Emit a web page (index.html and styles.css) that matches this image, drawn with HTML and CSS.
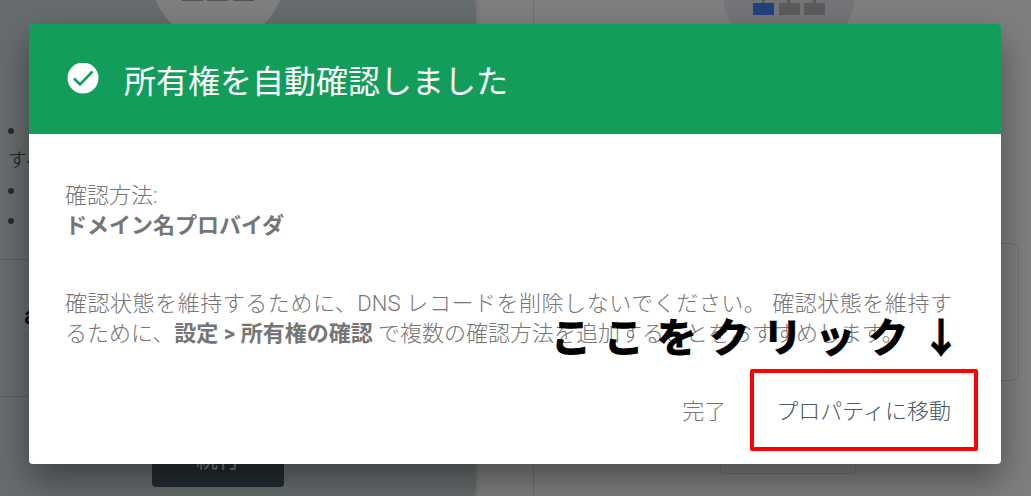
FILE: index.html
```
<!DOCTYPE html>
<html lang="ja">
<head>
<meta charset="utf-8">
<meta name="viewport" content="width=device-width, initial-scale=1">
<title>所有権を自動確認しました</title>
<link rel="stylesheet" href="styles.css">
</head>
<body>
<div class="screen">
  <main class="page">
    <section class="panel panel-domain">
      <svg class="panel-icon" viewBox="0 0 134 60" aria-hidden="true">
        <circle cx="67" cy="-25" r="67" fill="#fff"/>
        <path d="M31 -10h21V1H31zM56 -10h21V1H56zM82 -10h21V1H82z" fill="#aaa"/>
      </svg>
      <ul class="notes">
        <li><span class="note-text">すべ</span></li>
        <li></li>
        <li></li>
      </ul>
      <div class="field-area">
        <input class="domain-input" type="text" value="a" aria-label="ドメイン">
      </div>
      <button class="continue" type="button">続行</button>
    </section>
    <section class="panel panel-url">
      <svg class="panel-icon" viewBox="0 0 134 60" aria-hidden="true">
        <circle cx="67" cy="-8" r="66" fill="#e8eaf0"/>
        <path d="M40 0h3v3h-3zM65 0h3v3h-3zM91 0h3v3h-3zM57 3h21v12H57zM82 3h21v12H82z" fill="#b9b9b9"/>
        <path d="M31 3h21v12H31z" fill="#4285f4"/>
      </svg>
      <div class="url-box"></div>
      <div class="url-action"></div>
    </section>
  </main>

  <div class="overlay">
    <div class="dialog" role="dialog" aria-labelledby="dialog-title">
      <header class="dialog-header">
        <svg class="check" viewBox="0 0 32 32" aria-hidden="true">
          <circle cx="16" cy="15" r="15.5" fill="#fff"/>
          <path d="M7 15.500l6 6L25.500 8.500" fill="none" stroke="#129e5a" stroke-width="2.600"/>
        </svg>
        <h1 class="dialog-title" id="dialog-title">所有権を自動確認しました</h1>
      </header>
      <div class="dialog-body">
        <p class="method">確認方法:<br><strong>ドメイン名プロバイダ</strong></p>
        <p class="advice">確認状態を維持するために、DNS レコードを削除しないでください。 確認状態を維持するために、<strong>設定 &gt; 所有権の確認</strong> で複数の確認方法を追加することをおすすめします。</p>
      </div>
      <footer class="dialog-actions">
        <button class="action" type="button">完了</button>
        <button class="action action-primary" type="button">プロパティに移動</button>
      </footer>
      <p class="callout">ここをクリック↓</p>
      <div class="highlight"></div>
    </div>
  </div>
</div>
</body>
</html>
```
FILE: styles.css
```
* {
  box-sizing: border-box;
}

body {
  margin: 0;
  font-family: Roboto, "Noto Sans CJK JP", sans-serif;
  font-size: 22px;
  line-height: 30px;
  color: #757575;
}

p, h1, ul {
  margin: 0;
  padding: 0;
}

button, input {
  font: inherit;
}

.screen {
  position: relative;
  min-height: 100vh;
  overflow: hidden;
}

.page {
  display: grid;
  grid-template-columns: 46% 1fr;
  min-height: 100vh;
  background: #fff;
}

.panel {
  display: flex;
  flex-direction: column;
}

.panel-icon {
  display: block;
  align-self: center;
  width: 134px;
  height: 60px;
}

.panel-domain {
  background: #cfd8dc;
  box-shadow: 0 0 6px #999;
}

.panel-domain .panel-icon {
  margin-right: 38px;
}

.notes {
  height: 199px;
  padding: 56px 8px 0;
  list-style: none;
  font-size: 19px;
  font-weight: 300;
  color: #263238;
}

.notes li {
  padding-top: 12px;
}

.notes li::before {
  content: "";
  display: block;
  width: 6px;
  height: 6px;
  margin-bottom: 12px;
  border-radius: 50%;
  background: #455a64;
}

.note-text {
  display: block;
}

.field-area {
  height: 138px;
  padding: 37px 24px;
  border-top: 1px solid #b0b8bc;
  border-bottom: 1px solid #b0b8bc;
}

.domain-input {
  width: 100%;
  height: 38px;
  padding: 0;
  border: 0;
  border-bottom: 1px solid #b0b8bc;
  background: none;
  font-size: 24px;
  font-weight: 500;
  color: #000;
}

.continue {
  align-self: center;
  width: 132px;
  height: 54px;
  margin: 36px 38px 0 0;
  border: 0;
  border-radius: 4px;
  background: #455a64;
  color: #fff;
}

.panel-url {
  margin-left: 59px;
  padding-right: 12px;
  border-left: 1px solid #ddd;
}

.panel-url .panel-icon {
  margin-left: 24px;
}

.url-box {
  height: 138px;
  margin: 183px 0 0 40px;
  border: 1px solid #ddd;
  border-radius: 8px;
}

.url-action {
  align-self: center;
  width: 136px;
  height: 54px;
  margin: 39px 0 0 22px;
  border: 1px solid #ddd;
  border-radius: 4px;
}

.overlay {
  position: absolute;
  inset: 0;
  padding: 24px 30px 32px 29px;
  background: rgba(0, 0, 0, 0.5);
}

.dialog {
  position: relative;
  border-radius: 4px;
  background: #fff;
  box-shadow: 0 16px 36px rgba(0, 0, 0, 0.4);
}

.dialog-header {
  display: flex;
  align-items: center;
  gap: 25px;
  height: 110px;
  padding: 0 38px;
  border-radius: 3px 3px 0 0;
  background: #129e5a;
}

.check {
  width: 32px;
  height: 32px;
}

.dialog-title {
  padding-top: 6px;
  font-size: 32px;
  font-weight: 400;
  line-height: 48px;
  color: #fff;
}

.dialog-body {
  display: flex;
  flex-direction: column;
  gap: 48px;
  padding: 47px 49px 0 36px;
  font-weight: 300;
}

.dialog-body strong {
  font-weight: 700;
}

.advice {
  text-align: justify;
}

.dialog-actions {
  display: flex;
  justify-content: flex-end;
  gap: 50px;
  padding: 48px 50px 37px;
}

.action {
  padding: 0;
  border: 0;
  background: none;
  font-weight: 300;
  line-height: 30px;
  color: #757575;
}

.action-primary {
  color: #455a64;
}

.callout {
  position: absolute;
  right: 40px;
  bottom: 102px;
  width: 410px;
  font-family: "Noto Sans CJK JP", sans-serif;
  font-size: 40px;
  font-weight: 700;
  line-height: 54px;
  text-align: justify;
  text-align-last: justify;
  color: #000;
  -webkit-text-stroke: 1px #000;
}

.highlight {
  position: absolute;
  right: 23px;
  bottom: 13px;
  width: 228px;
  height: 82px;
  border: 4px solid #f00;
  border-radius: 2px;
  pointer-events: none;
}
```
